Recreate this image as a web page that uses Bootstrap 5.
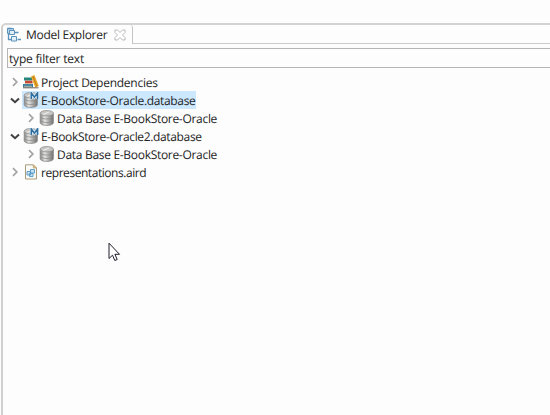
<!DOCTYPE html>
<html lang="en">
<head>
<meta charset="utf-8">
<meta name="viewport" content="width=device-width, initial-scale=1">
<title>Model Explorer</title>
<link href="https://cdn.jsdelivr.net/npm/bootstrap@5.3.0/dist/css/bootstrap.min.css" rel="stylesheet">
<style>
body { background: #fdfdfd; color: #242424; font: 12px/18px "Open Sans", "Noto Sans", sans-serif; height: 415px; text-rendering: geometricPrecision; }
svg { display: block; flex: none; }
.view-pane { margin: 23px 0 0 1px; height: 392px; border-left: 2px solid #cfcfcf; border-top: 2px solid #d3d3d3; border-top-left-radius: 5px; }
.view-tabs { height: 19px; }
.view-tab { width: 130px; padding: 1px 0 0 3px; border-right: 1px solid #c4c4c4; border-top-right-radius: 3px; }
.tab-rest { border-bottom: 1px solid #cbcbcb; }
.filter-box { margin: 4px 0 0 4px; height: 20px; padding: 1px 0 0 1px; border: 1px solid #b5b5b5; border-right: 0; letter-spacing: -.2px; }
.model-tree { padding: 5px 0 0 6px; }
.tree-row { height: 18px; }
.tree-child { padding-left: 16px; }
.twisty { width: 12px; height: 18px; margin-right: 1px; }
.tree-label { height: 18px; padding: 0 1px; }
.tree-label svg { margin-right: 2px; }
.tree-label span { padding-top: 1px; }
.picked { background: #cce8ff; }
.pointer { left: 108px; top: 242px; }
.tab-close { margin-left: 7px; }
.t-title { width: 81px; letter-spacing: -.29px; }
.t-deps { letter-spacing: -.26px; }
.t-one { letter-spacing: -.34px; }
.t-base { letter-spacing: -.3px; }
.t-two { letter-spacing: -.35px; }
.t-aird { letter-spacing: -.45px; }
</style>
<script src="https://cdn.jsdelivr.net/npm/bootstrap@5.3.0/dist/js/bootstrap.bundle.min.js"></script>
</head>
<body class="overflow-hidden position-relative">
<svg width="0" height="0" class="position-absolute">
  <defs>
    <linearGradient id="metal"><stop offset="0" stop-color="#858585"/><stop offset=".35" stop-color="#e6e6e4"/><stop offset=".6" stop-color="#b4b4b2"/><stop offset="1" stop-color="#707070"/></linearGradient>
    <symbol id="right" viewBox="0 0 12 18"><path d="M4 5.200l3.800 3.800-3.800 3.800" fill="none" stroke="#a3a3a3" stroke-width="1.700"/></symbol>
    <symbol id="down" viewBox="0 0 12 18"><path d="M2 7.500l4 3.700 4-3.700" fill="none" stroke="#404040" stroke-width="2"/></symbol>
    <symbol id="cylinder" viewBox="0 0 16 16">
      <path d="M1.200 3.200v9.500c0 1.600 2.700 2.700 6.600 2.700s6.600-1.100 6.600-2.700V3.200z" fill="url(#metal)" stroke="#8a8a8a" stroke-width=".8"/>
      <path d="M1.500 7c1 1.500 3.500 2 6.300 2s5.300-.5 6.300-2M1.500 10.500c1 1.500 3.500 2 6.300 2s5.300-.5 6.300-2" fill="none" stroke="#858585" stroke-width=".7"/>
      <ellipse cx="7.800" cy="3.200" rx="6.600" ry="2.700" fill="#c6c6c4" stroke="#929292" stroke-width=".8"/>
      <path d="M4 4.500l6-2.500" stroke="#eee" stroke-width="1.200"/>
    </symbol>
    <symbol id="model" viewBox="0 0 16 16">
      <use href="#cylinder" width="16" height="16"/>
      <path d="M8.300 7V.9l3.100 4.300L14.500.9V7" fill="none" stroke="#dce9f2" stroke-width="3"/>
      <path d="M8.300 7V.9l3.100 4.300L14.500.9V7" fill="none" stroke="#2f6fa0" stroke-width="1.500"/>
    </symbol>
  </defs>
</svg>

<main class="view-pane">
  <header class="view-tabs d-flex">
    <div class="view-tab d-flex align-items-center">
      <svg width="16" height="16" viewBox="0 0 16 16"><g fill="#b9d7ef" stroke="#5b93bd"><path d="M1.500 1.500h6v5h-6z"/><path d="M2.500 6.500v6h3M9 5.500h3.500M11.500 12.500H15" fill="none" stroke-width="1.300"/><path d="M3.500 3.500h5v4h-5zM5.500 9.500h5v4.500h-5z" fill="#e0effa"/><path d="M1.500 1.500h4" stroke-width="1.600"/></g></svg>
      <span class="t-title text-nowrap ms-1">Model Explorer</span>
      <svg class="tab-close" width="12" height="12" viewBox="0 0 12 12"><path d="M1 1h2.500L6 3.500 8.500 1H11v2.500L8.500 6 11 8.500V11H8.500L6 8.500 3.500 11H1V8.500L3.500 6 1 3.500z" fill="#fff" stroke="#b2b2b2" stroke-width=".9"/></svg>
    </div>
    <div class="tab-rest flex-grow-1"></div>
  </header>
  <div class="filter-box">type filter text</div>

  <div class="model-tree" role="tree">
    <div class="tree-row d-flex" role="treeitem">
      <svg class="twisty"><use href="#right"/></svg>
      <div class="tree-label d-flex align-items-center">
        <svg width="16" height="16" viewBox="0 0 16 16"><path d="M1 3.500h8v3H1z" fill="#27857a"/><path d="M2 6.700h7.500v3H2z" fill="#c8472f"/><path d="M0 10h10v3.300H0z" fill="#347b9d"/><path d="M1 9.700h8M1 12.300h8" stroke="#e7d5b8" stroke-width=".7"/><path d="M8 2.500l3.500-1.400L15.800 12l-3.600 1.400z" fill="#eda92b"/><path d="M9.800 2l4.200 10.500" stroke="#a86a16" stroke-width=".8"/><path d="M0 13.800h15.500" stroke="#6d6251"/></svg>
        <span class="t-deps text-nowrap">Project Dependencies</span>
      </div>
    </div>
    <div class="tree-row d-flex" role="treeitem" aria-expanded="true">
      <svg class="twisty"><use href="#down"/></svg>
      <div class="tree-label picked d-flex align-items-center"><svg width="16" height="16"><use href="#model"/></svg><span class="t-one text-nowrap">E-BookStore-Oracle.database</span></div>
    </div>
    <div class="tree-row tree-child d-flex" role="treeitem">
      <svg class="twisty"><use href="#right"/></svg>
      <div class="tree-label d-flex align-items-center"><svg width="16" height="16"><use href="#cylinder"/></svg><span class="t-base text-nowrap">Data Base E-BookStore-Oracle</span></div>
    </div>
    <div class="tree-row d-flex" role="treeitem" aria-expanded="true">
      <svg class="twisty"><use href="#down"/></svg>
      <div class="tree-label d-flex align-items-center"><svg width="16" height="16"><use href="#model"/></svg><span class="t-two text-nowrap">E-BookStore-Oracle2.database</span></div>
    </div>
    <div class="tree-row tree-child d-flex" role="treeitem">
      <svg class="twisty"><use href="#right"/></svg>
      <div class="tree-label d-flex align-items-center"><svg width="16" height="16"><use href="#cylinder"/></svg><span class="t-base text-nowrap">Data Base E-BookStore-Oracle</span></div>
    </div>
    <div class="tree-row d-flex" role="treeitem">
      <svg class="twisty"><use href="#right"/></svg>
      <div class="tree-label d-flex align-items-center">
        <svg width="16" height="16" viewBox="0 0 16 16"><path d="M2.500.8h7.800l3.200 3.200v11h-11z" fill="#fafbf8" stroke="#a99d7d"/><path d="M10.300.8V4h3.200z" fill="#e2c98f" stroke="#b59c64" stroke-width=".7"/><g fill="#c4e0f4" stroke="#5598c4" stroke-width=".9"><path d="M7.500 5.500h4v3.500h-4zM4 7.500h3.500V11H4zM6.500 9.500H10v3H6.500z"/></g></svg>
        <span class="t-aird text-nowrap">representations.aird</span>
      </div>
    </div>
  </div>
</main>
<svg class="pointer position-absolute" width="13" height="20" viewBox="0 0 13 20"><path d="M1 1.200v15.300l3.500-3.300 2.300 5.300 2.400-1-2.300-5.200h4.600z" fill="#fff" stroke="#1d1d2b" stroke-width="1"/></svg>
</body>
</html>
